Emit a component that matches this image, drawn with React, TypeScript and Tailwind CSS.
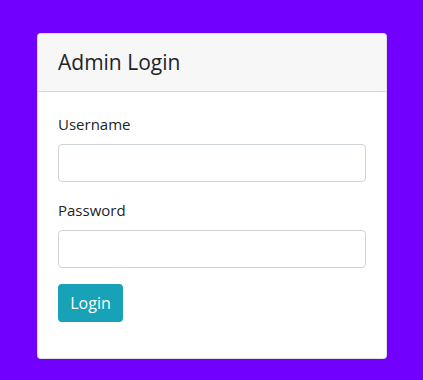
import type { JSX } from "react";

export default function App(): JSX.Element {
  return (
    <div
      className="min-h-[380px] w-full bg-[#7100ff] pt-[33px]"
      style={{ fontFamily: '"Open Sans", "Noto Sans", sans-serif' }}
    >
      <div className="ml-[37px] w-[350px] overflow-hidden rounded-[4px] border border-black/[0.125] bg-white">
        <div className="flex h-[58px] items-center border-b border-black/[0.125] bg-[#f7f7f7] px-5">
          <h4 className="text-[21px] leading-none text-[#212529]">Admin Login</h4>
        </div>
        <form className="flex flex-col p-5 pb-9 text-[15px] text-[#212529]">
          <label className="mb-2 leading-6">Username</label>
          <input
            type="text"
            className="mb-4 h-[38px] w-full rounded-[4px] border border-[#ced4da] px-3"
          />
          <label className="mb-2 leading-6">Password</label>
          <input
            type="password"
            className="mb-4 h-[38px] w-full rounded-[4px] border border-[#ced4da] px-3"
          />
          <button
            type="button"
            className="h-[38px] w-[65px] rounded-[4px] bg-[#17a2b8] text-[16px] text-white"
          >
            Login
          </button>
        </form>
      </div>
    </div>
  );
}
